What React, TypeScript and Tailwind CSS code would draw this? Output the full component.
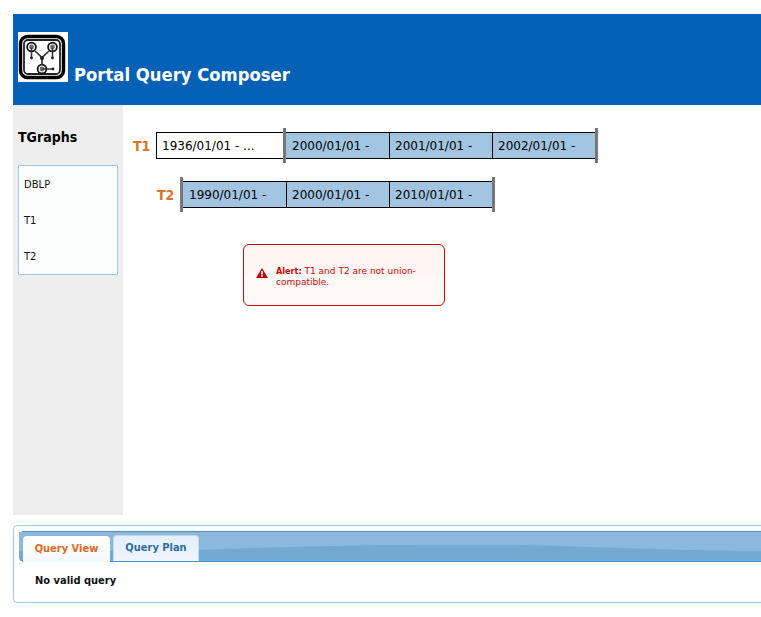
const ui = '"DejaVu Sans", sans-serif';
const cond = '"DejaVu Sans Condensed", "DejaVu Sans", sans-serif';

function Logo() {
  return (
    <svg width="50" height="50" viewBox="0 0 50 50" className="shrink-0 bg-white">
      <rect x="2.5" y="4.5" width="43" height="41" rx="7" fill="none" stroke="#000" strokeWidth="3.4" />
      <rect x="6" y="8" width="36" height="34" rx="4" fill="none" stroke="#222" strokeWidth="1.8" />
      <g fill="none" stroke="#111" strokeWidth="1.8">
        <circle cx="13.5" cy="15" r="4.4" />
        <circle cx="34.5" cy="15" r="4.4" />
        <circle cx="24" cy="37" r="4.4" />
      </g>
      <g fill="#666">
        <circle cx="13.5" cy="15" r="2.4" />
        <circle cx="34.5" cy="15" r="2.4" />
        <circle cx="24" cy="37" r="2.4" />
      </g>
      <g fill="none" stroke="#333" strokeWidth="1.5">
        <path d="M13.5 16V26M34.5 16V26" />
        <path d="M17 19L24 25.5L31 19M24 25.5V33" strokeWidth="1.7" />
        <path d="M25 37H35" />
      </g>
      <g fill="#222">
        <circle cx="13.5" cy="26" r="1.4" />
        <circle cx="34.5" cy="26" r="1.4" />
        <circle cx="24" cy="26" r="2" />
        <circle cx="35" cy="37" r="1.4" />
      </g>
    </svg>
  );
}

function Cell({ text, w, first, white }: { text: string; w: string; first?: boolean; white?: boolean }) {
  return (
    <div
      className={`${w} h-full flex items-center text-[12px] whitespace-nowrap text-black ${white ? 'bg-white' : 'bg-[#a1c5e1]'} ${first ? '' : 'border-l border-black'}`}
    >
      {text}
    </div>
  );
}

function Handle({ className }: { className: string }) {
  return <div className={`absolute w-[3px] bg-[#777777] ${className}`} />;
}

function Timelines() {
  return (
    <div className="flex flex-col pt-[27px]">
      <div className="flex items-center h-[27px]">
        <span className="w-[23px] ml-[10px] font-bold text-[14px] leading-none text-[#d9741f]" style={{ fontFamily: cond }}>T1</span>
        <div className="relative flex h-[27px] border-y border-l border-black">
          <Cell text="1936/01/01 - ..." w="w-[128px] pl-[5px]" first white />
          <Cell text="2000/01/01 -" w="w-[104px] pl-[6px]" />
          <Cell text="2001/01/01 -" w="w-[103px] pl-[5px]" />
          <Cell text="2002/01/01 -" w="w-[103px] pl-[5px]" />
          <Handle className="left-[126px] top-[-5px] h-[35px]" />
          <Handle className="left-[438px] top-[-5px] h-[35px]" />
        </div>
      </div>
      <div className="flex items-center h-[27px] mt-[22px]">
        <span className="w-[23px] ml-[34px] font-bold text-[14px] leading-none text-[#d9741f]" style={{ fontFamily: cond }}>T2</span>
        <div className="relative flex h-[27px] border-y border-black">
          <Cell text="1990/01/01 -" w="w-[103px] ml-[3px] pl-[6px]" first />
          <Cell text="2000/01/01 -" w="w-[103px] pl-[5px]" />
          <Cell text="2010/01/01 -" w="w-[103px] pl-[5px]" />
          <Handle className="left-[0px] top-[-5px] h-[35px]" />
          <Handle className="left-[312px] top-[-5px] h-[35px]" />
        </div>
      </div>
    </div>
  );
}

function Alert() {
  return (
    <div className="ml-[120px] mt-[36px] w-[202px] h-[62px] flex items-center rounded-[6px] border border-[#cd0a0a] bg-[linear-gradient(#fff5f2_0%,#fff5f2_50%,#fef8f6_50%,#fef8f6_100%)] pl-[12px] pr-[8px]">
      <svg width="12" height="10" viewBox="0 0 12 10" className="shrink-0 mr-[8px] mt-[-4px]">
        <path d="M6 0L12 10H0Z" fill="#b80808" />
        <rect x="5.2" y="3" width="1.6" height="3.6" fill="#fff" />
        <rect x="5.2" y="7.3" width="1.6" height="1.6" fill="#fff" />
      </svg>
      <p className="mt-[3px] text-[9px] leading-[11px] text-[#cd0a0a]" style={{ fontFamily: ui }}>
        <b style={{ fontFamily: cond }}>Alert:</b> T1 and T2 are not union-compatible.
      </p>
    </div>
  );
}

function Sidebar() {
  return (
    <aside className="w-[110px] h-[410px] shrink-0 bg-[#eeeeee] px-[5px]">
      <h2 className="mt-[24px] h-[16px] text-[14px] leading-[16px] font-bold text-black" style={{ fontFamily: cond }}>TGraphs</h2>
      <ul className="mt-[20px] w-[100px] h-[110px] border border-[#a6c9e2] bg-[#fcfdfd] pl-[5px] text-[10px] text-[#111111]">
        <li className="h-[36px] flex items-center">DBLP</li>
        <li className="h-[36px] flex items-center">T1</li>
        <li className="h-[36px] flex items-center">T2</li>
      </ul>
    </aside>
  );
}

function BottomPanel() {
  return (
    <section className="mt-[10px] h-[78px] border-y border-l border-[#a6c9e2] rounded-l-[5px] bg-white pl-[5px] pt-[5px] overflow-hidden" style={{ fontFamily: cond }}>
      <div className="relative h-[31px] rounded-tl-[5px] rounded-bl-[5px] border-y border-[#4f8fc4] bg-[#72aad4] flex items-end pl-[4px] gap-[3px]">
        <svg className="absolute left-0 top-0 w-full h-[29px]" viewBox="0 0 742 29" preserveAspectRatio="none">
          <path d="M0 0H742V19C640 19 560 13 470 13C380 13 280 13 160 19H0Z" fill="#8bb8dc" />
        </svg>
        <div className="relative h-[26px] w-[87px] -mb-[1px] rounded-t-[4px] bg-[linear-gradient(#ffffff,#f4f9fc)] flex items-center justify-center text-[11px] font-bold text-[#e0691a]">
          Query View
        </div>
        <div className="relative h-[26px] w-[86px] rounded-t-[4px] border border-b-0 border-[#c5dbec] bg-[linear-gradient(#e3f0fb,#edf5fd)] flex items-center justify-center text-[11px] font-bold text-[#2e6e9e]">
          Query Plan
        </div>
      </div>
      <p className="ml-[16px] mt-[12px] text-[11px] leading-[14px] font-bold text-[#111111]">No valid query</p>
    </section>
  );
}

export default function App() {
  return (
    <div className="w-[761px] h-[617px] overflow-hidden bg-white pl-[13px] pt-[14px]" style={{ fontFamily: ui }}>
      <header className="h-[91px] bg-[#0561b5] flex items-start pl-[5px] pt-[18px]">
        <Logo />
        <h1 className="ml-[6px] mt-[31px] text-[18.3px] leading-[24px] font-bold text-white whitespace-nowrap" style={{ fontFamily: cond }}>Portal Query Composer</h1>
      </header>
      <div className="flex">
        <Sidebar />
        <main className="flex-1">
          <Timelines />
          <Alert />
        </main>
      </div>
      <BottomPanel />
    </div>
  );
}
